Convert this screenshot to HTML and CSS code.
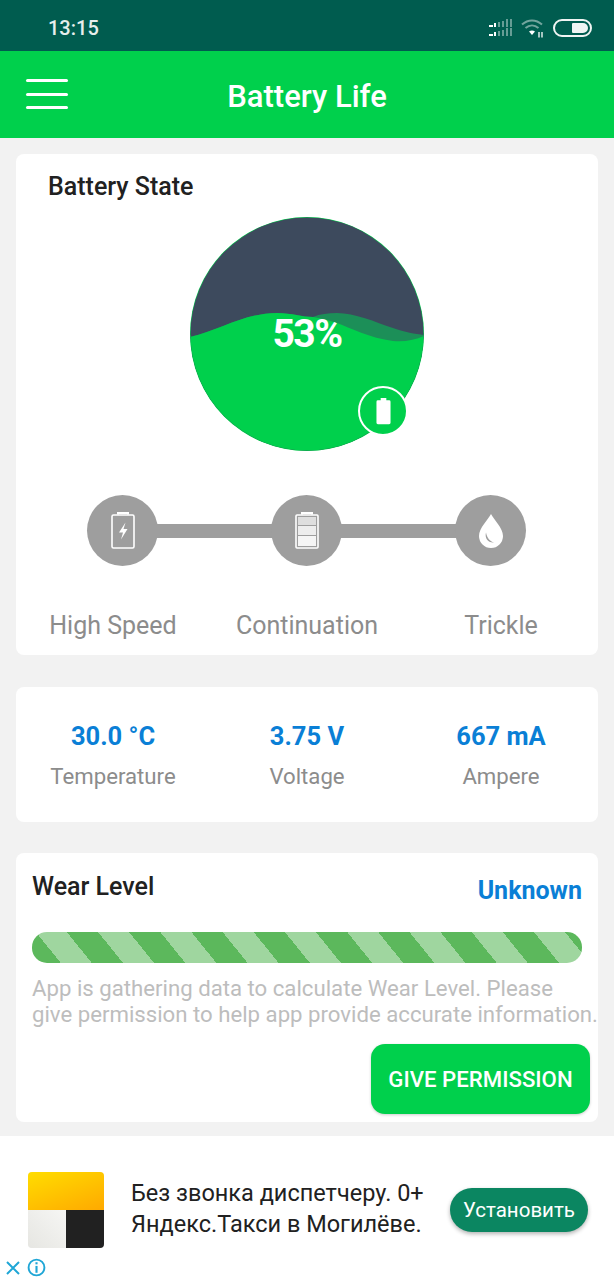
FILE: index.html
```html
<!DOCTYPE html>
<html lang="en">
<head>
<meta charset="utf-8">
<title>Battery Life</title>
<link rel="stylesheet" href="styles.css">
</head>
<body>
<div class="screen">
  <div class="status-bar">
    <span class="clock">13:15</span>
    <div class="status-icons">
      <svg class="signal" width="24" height="18" viewBox="0 0 24 18">
        <g fill="#ffffff">
          <rect x="0" y="6" width="4" height="2"/><rect x="5" y="4" width="2" height="4"/>
          <rect x="0" y="15" width="4" height="2"/><rect x="5" y="13" width="2" height="4"/>
        </g>
        <g fill="#ffffff" opacity=".4">
          <rect x="9" y="3" width="2" height="5"/><rect x="13" y="2" width="2" height="6"/><rect x="17" y="0" width="2" height="8"/><rect x="21" y="0" width="2" height="8"/>
          <rect x="9" y="12" width="2" height="5"/><rect x="13" y="11" width="2" height="6"/><rect x="17" y="9" width="2" height="8"/><rect x="21" y="9" width="2" height="8"/>
        </g>
      </svg>
      <svg class="wifi" width="24" height="20" viewBox="0 0 24 20">
        <path d="M1 6.500C7 1 15 1 21 6.500" fill="none" stroke="#ffffff" stroke-opacity=".45" stroke-width="2"/>
        <path d="M4.500 10C8.500 6.500 13.500 6.500 17.500 10" fill="none" stroke="#ffffff" stroke-opacity=".45" stroke-width="2"/>
        <path d="M8 13.500C10 12 12 12 14 13.500L11 17Z" fill="#ffffff"/>
        <path d="M18 14v5.500M21 19.500V14" stroke="#ffffff" stroke-width="1.300" fill="none"/>
      </svg>
      <span class="battery"><span class="battery-level"></span></span>
    </div>
  </div>

  <header class="app-bar">
    <button class="menu" aria-label="Menu"><span></span><span></span><span></span></button>
    <h1>Battery Life</h1>
  </header>

  <main class="content">
    <section class="card state-card">
      <h2 class="state-title">Battery State</h2>
      <div class="gauge">
        <svg width="234" height="234" viewBox="0 0 234 234">
          <defs><clipPath id="disc"><circle cx="117" cy="117" r="116.500"/></clipPath></defs>
          <circle cx="117" cy="117" r="117" fill="#00d04c"/>
          <g clip-path="url(#disc)">
            <rect width="234" height="234" fill="#3d4a5d"/>
            <path d="M0 120C30 113 55 96 87 96C102 96 112 100 123 100C130 97 138 96 147 96C165 96 185 105 203 111C215 115 225 117 234 118V200H0Z" fill="#1c8f58"/>
            <path d="M0 120C30 113 55 96 87 96C102 96 112 100 123 100C130 101 138 103 147 106C160 111 180 121 203 124C215 125 225 123 234 119V234H0Z" fill="#00d04c"/>
          </g>
        </svg>
        <span class="percent">53%</span>
        <span class="charge-badge">
          <svg width="15" height="28" viewBox="0 0 16 28"><path d="M5 0h6v2.500h3a1.500 1.500 0 0 1 1.500 1.500v22.500a1.500 1.500 0 0 1-1.500 1.500H2a1.500 1.500 0 0 1-1.500-1.500V4A1.500 1.500 0 0 1 2 2.500h3z" fill="#ffffff"/></svg>
        </span>
      </div>
      <div class="stages">
        <span class="stage">
          <svg width="24" height="37" viewBox="0 0 24 37" fill="none" stroke="#ffffff">
            <path d="M7 2.500V1h10v1.500" stroke-width="2"/>
            <rect x="1" y="3" width="22" height="33" rx="1.500" stroke-width="1.600"/>
            <path d="M14.500 10.500l-6.500 10h4l-2 7 6.500-10.500h-4z" fill="#ffffff" stroke="none"/>
          </svg>
        </span>
        <span class="link"></span>
        <span class="stage">
          <svg width="24" height="37" viewBox="0 0 24 37" fill="none" stroke="#ffffff">
            <path d="M7 2.500V1h10v1.500" stroke-width="2"/>
            <rect x="1" y="3" width="22" height="33" rx="1" stroke-width="1.600"/>
            <rect x="3" y="5" width="18" height="8" fill="#dedede" stroke="none"/>
            <rect x="3" y="14" width="18" height="9" fill="#ededed" stroke="none"/>
            <rect x="3" y="24" width="18" height="10" fill="#f5f5f5" stroke="none"/>
          </svg>
        </span>
        <span class="link"></span>
        <span class="stage">
          <svg width="24" height="34" viewBox="0 0 24 34">
            <path d="M12 0C15 6 24 14 24 22A12 12 0 0 1 0 22C0 14 9 6 12 0Z" fill="#ffffff"/>
            <path d="M7 18.500C5.500 24 9 29 15 28.500C11 27.500 8 24 7 18.500Z" fill="#9e9e9e"/>
          </svg>
        </span>
      </div>
      <div class="columns stage-labels">
        <span>High Speed</span>
        <span>Continuation</span>
        <span>Trickle</span>
      </div>
    </section>

    <section class="card readings">
      <div class="columns">
        <div class="reading"><strong>30.0 °C</strong><span>Temperature</span></div>
        <div class="reading"><strong>3.75 V</strong><span>Voltage</span></div>
        <div class="reading"><strong>667 mA</strong><span>Ampere</span></div>
      </div>
    </section>

    <section class="card wear">
      <div class="wear-head">
        <h2>Wear Level</h2>
        <strong>Unknown</strong>
      </div>
      <div class="stripes"></div>
      <p>App is gathering data to calculate Wear Level. Please<br>give permission to help app provide accurate information.</p>
      <button class="permit">GIVE PERMISSION</button>
    </section>
  </main>

  <aside class="ad">
    <div class="ad-logo"><i class="logo-top"></i><i class="logo-left"></i><i class="logo-right"></i></div>
    <div class="ad-copy">Без звонка диспетчеру. 0+<br>Яндекс.Такси в Могилёве.</div>
    <button class="install">Установить</button>
    <div class="ad-marks">
      <svg width="16" height="16" viewBox="0 0 16 16"><path d="M2 2l12 12M14 2L2 14" stroke="#1fa6d6" stroke-width="2" fill="none"/></svg>
      <svg width="19" height="19" viewBox="0 0 18 18"><circle cx="9" cy="9" r="7.500" fill="none" stroke="#1fa6d6" stroke-width="1.800"/><rect x="8" y="7.500" width="2" height="6.500" fill="#1fa6d6"/><rect x="8" y="4" width="2" height="2" fill="#1fa6d6"/></svg>
    </div>
  </aside>
</div>
</body>
</html>
```
FILE: styles.css
```css
* { box-sizing: border-box; }
html, body { margin: 0; padding: 0; }
body { font-family: Roboto, "Noto Sans", sans-serif; background: #f2f2f2; }
h1, h2, p { margin: 0; }
button { border: 0; font-family: inherit; padding: 0; }

.screen { position: relative; width: 614px; height: 1280px; overflow: hidden; display: flex; flex-direction: column; background: #f2f2f2; }

/* System status bar */
.status-bar { height: 51px; flex: none; background: #005c4f; display: flex; align-items: center; justify-content: space-between; padding: 4px 22px 0 48px; }
.clock { color: #e6efec; font-size: 20px; font-weight: 500; }
.status-icons { display: flex; align-items: center; gap: 8px; }
.battery { width: 39px; height: 18px; border: 2px solid #f0f5f3; border-radius: 9px; display: flex; justify-content: flex-end; padding: 2px; }
.battery-level { width: 16px; background: #f0f5f3; border-radius: 1px 5px 5px 1px; }

/* Top application bar */
.app-bar { height: 87px; flex: none; background: #00d04c; position: relative; display: flex; align-items: center; justify-content: center; padding-top: 3px; }
.app-bar h1 { color: #ffffff; font-size: 31px; font-weight: 500; }
.menu { position: absolute; left: 26px; top: 28px; width: 42px; height: 30px; background: none; display: flex; flex-direction: column; justify-content: space-between; }
.menu span { display: block; height: 3px; width: 42px; border-radius: 2px; background: #ffffff; }

/* Cards */
.content { flex: none; padding: 16px 16px 0; display: flex; flex-direction: column; gap: 32px; }
.card { background: #ffffff; border-radius: 8px; }
.columns { display: grid; grid-template-columns: repeat(3, 1fr); text-align: center; }

.state-card { height: 501px; padding-top: 19px; }
.state-title { font-size: 25px; font-weight: 500; color: #212121; line-height: 28px; padding-left: 32px; }
.gauge { position: relative; width: 234px; height: 234px; margin: 16px auto 0 auto; }
.gauge svg { display: block; }
.percent { position: absolute; left: 0; right: 0; top: 94px; text-align: center; color: #ffffff; font-size: 39px; font-weight: 700; line-height: 46px; letter-spacing: -1.500px; }
.charge-badge { position: absolute; left: 168px; top: 169px; width: 50px; height: 50px; border-radius: 50%; border: 2px solid #ffffff; background: #00d04c; display: flex; align-items: center; justify-content: center; }

.stages { width: 439px; margin: 44px 0 0 71px; display: flex; align-items: center; }
.stage { width: 71px; height: 71px; flex: none; border-radius: 50%; background: #9e9e9e; display: flex; align-items: center; justify-content: center; }
.link { flex: 1; height: 14px; margin: 0 -2px; background: #9e9e9e; }
.stage-labels { margin-top: 45px; color: #8c8c8c; font-size: 25px; line-height: 30px; }

.readings { height: 135px; padding-top: 33px; }
.reading { display: flex; flex-direction: column; gap: 11px; align-items: center; }
.reading strong { color: #0a7fd6; font-size: 25.500px; font-weight: 700; line-height: 32px; }
.reading span { color: #8c8c8c; font-size: 22.200px; line-height: 26px; }

.wear { height: 269px; margin-top: -1px; padding: 19px 16px 0; position: relative; }
.wear-head { display: flex; justify-content: space-between; }
.wear-head h2 { font-size: 25px; font-weight: 500; color: #212121; line-height: 30px; }
.wear-head strong { color: #0a7fd6; font-size: 25px; font-weight: 700; line-height: 30px; padding-top: 4px; }
.stripes { height: 31px; margin-top: 26px; border-radius: 15px; background: repeating-linear-gradient(51deg, #5cb85c 0, #5cb85c 22.400px, #9fd69f 22.400px, #9fd69f 46.500px, #5cb85c 46.500px, #5cb85c 48.400px); }
.wear p { width: 572px; margin-top: 12px; color: #bdbdbd; font-size: 22.200px; line-height: 26px; white-space: nowrap; }
.permit { position: absolute; right: 8px; bottom: 8px; width: 219px; height: 70px; border-radius: 14px; background: #00d04c; color: #ffffff; font-size: 22.200px; font-weight: 500; box-shadow: 0 1px 3px rgba(0,0,0,.2); }

/* Advertising strip */
.ad { position: absolute; left: 0; right: 0; bottom: 0; height: 144px; background: #ffffff; display: flex; align-items: flex-start; padding: 36px 26px 0 28px; }
.ad-logo { position: relative; width: 76px; height: 76px; flex: none; border-radius: 4px; overflow: hidden; background: #f2f2f0; }
.ad-logo i { position: absolute; display: block; }
.logo-top { left: 0; top: 0; width: 76px; height: 38px; background: linear-gradient(160deg, #ffdd00, #ffa900); }
.logo-left { left: 0; top: 38px; width: 38px; height: 38px; background: linear-gradient(45deg, #e6e6e2, #f6f6f4); }
.logo-right { left: 38px; top: 38px; width: 38px; height: 38px; background: #212121; }
.ad-copy { margin: 6px 0 0 27px; width: 319px; flex: none; font-size: 23.500px; line-height: 31px; color: #212121; white-space: nowrap; }
.install { width: 138px; height: 44px; flex: none; margin: 16px 0 0 0; border-radius: 22px; background: #0b8661; color: #ffffff; font-size: 20.500px; box-shadow: 0 2px 4px rgba(0,0,0,.3); }
.ad-marks { position: absolute; left: 5px; bottom: 3px; display: flex; align-items: center; gap: 6px; }
```
